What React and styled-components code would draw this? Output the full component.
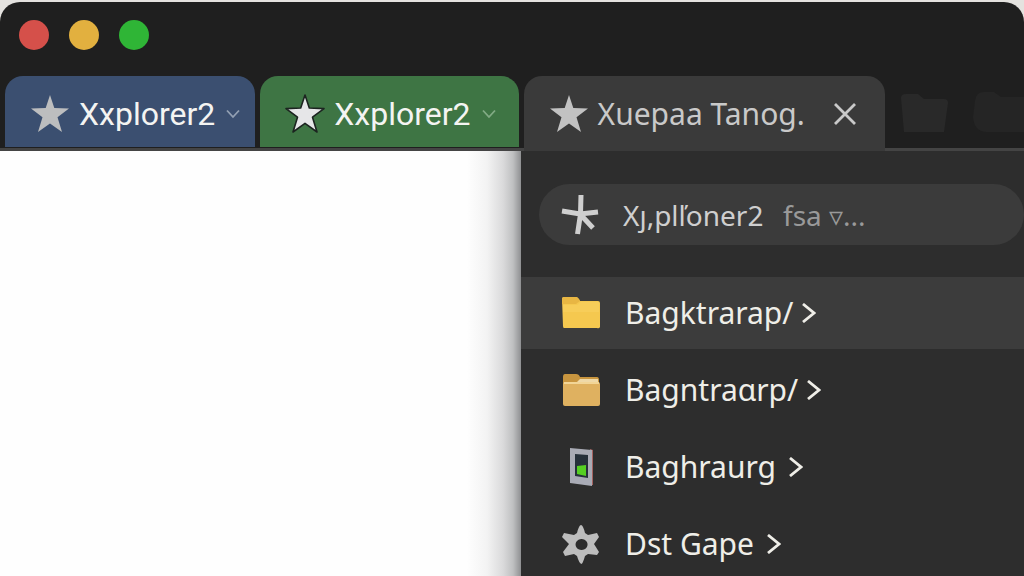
import React from "react";
import styled, { createGlobalStyle, css } from "styled-components";

const GlobalStyle = createGlobalStyle`
  *, *::before, *::after {
    box-sizing: border-box;
  }

  body {
    margin: 0;
    background: #e4e2df;
    font-family: "Noto Sans", "Open Sans", sans-serif;
  }

  button, input {
    font: inherit;
    color: inherit;
  }
`;

const Window = styled.div`
  display: flex;
  flex-direction: column;
  height: 100vh;
  padding-top: 2px;
  overflow: hidden;
`;

const TitleBar = styled.header`
  display: flex;
  align-items: center;
  gap: 20px;
  flex: none;
  height: 74px;
  padding: 0 19px 8px;
  border-radius: 20px 20px 0 0;
  background: #1f1f1f;
`;

const WindowButton = styled.button`
  width: 30px;
  height: 30px;
  padding: 0;
  border: 0;
  border-radius: 50%;
  background: ${({ $color }) => $color};
`;

const TabBar = styled.nav`
  display: flex;
  gap: 5px;
  flex: none;
  height: 75px;
  padding-left: 5px;
  background: linear-gradient(#1f1f1f 72px, #444444 72px);
`;

const Tab = styled.div`
  display: flex;
  align-items: center;
  flex: none;
  height: ${({ $active }) => ($active ? "75px" : "71px")};
  padding: ${({ $active }) => ($active ? "0" : "4px")}
    ${({ $roomy }) => ($roomy ? "20px" : "12px")} 0 24px;
  border-radius: 18px 18px 0 0;
  background: ${({ $background }) => $background};
  color: ${({ $active }) => ($active ? "#c9c9c9" : "#f4f4f2")};
`;

const TabLink = styled.a`
  display: flex;
  align-items: center;
  gap: 8px;
  color: inherit;
  font-family: ${({ $active }) =>
    $active ? `"Noto Sans", sans-serif` : `Roboto, sans-serif`};
  font-size: ${({ $active }) => ($active ? "30px" : "32px")};
  line-height: 40px;
  text-decoration: none;
  white-space: nowrap;
`;

const TabAction = styled.button`
  display: flex;
  align-items: center;
  justify-content: center;
  width: ${({ $wide }) => ($wide ? "56px" : "20px")};
  height: 40px;
  margin-left: ${({ $wide }) => ($wide ? "12px" : "8px")};
  padding: 0;
  border: 0;
  background: none;
`;

const GhostFolders = styled.div`
  display: flex;
  align-items: center;
  gap: 24px;
  height: 72px;
  padding-left: 10px;
  overflow: hidden;

  svg {
    flex: none;
  }
`;

const Panes = styled.main`
  display: grid;
  grid-template-columns: 521fr 503fr;
  flex: 1;
  min-height: 0;
`;

const Page = styled.section`
  background: linear-gradient(
    to left,
    #8f9092 0,
    #bfc0c1 8px,
    #dadadb 18px,
    #f3f3f3 34px,
    #fefefe 54px
  );
`;

const Sidebar = styled.aside`
  display: flex;
  flex-direction: column;
  gap: 32px;
  min-width: 0;
  padding-top: 33px;
  overflow: hidden;
  background: #2d2d2d;
`;

const SearchBox = styled.label`
  display: flex;
  align-items: center;
  gap: 24px;
  flex: none;
  height: 61px;
  margin-left: 18px;
  padding: 0 22px;
  border-radius: 31px;
  background: #3b3b3b;
  color: #cfcfcf;
`;

const SearchText = styled.span`
  display: flex;
  align-items: center;
  gap: 12px;
`;

const searchFont = css`
  font-size: 28px;
  line-height: 40px;
`;

const SearchInput = styled.input`
  ${searchFont}
  width: 148px;
  padding: 0;
  border: 0;
  outline: 0;
  background: none;
`;

const SearchHint = styled.span`
  ${searchFont}
  color: #999999;
  white-space: nowrap;
`;

const List = styled.ul`
  display: flex;
  flex-direction: column;
  gap: 5px;
  margin: 0;
  padding: 0;
  list-style: none;
`;

const RowButton = styled.button`
  display: flex;
  align-items: center;
  gap: 24px;
  width: 100%;
  height: 72px;
  padding: 0 40px;
  border: 0;
  background: ${({ $selected }) => ($selected ? "#3c3c3c" : "none")};
  color: #efeee8;
  text-align: left;
`;

const RowLabel = styled.span`
  display: flex;
  align-items: center;
  gap: ${({ $tight }) => ($tight ? "8px" : "12px")};
  font-size: 30px;
  line-height: 40px;
  white-space: nowrap;
`;

const Star = ({ fill, stroke }) => (
  <svg width="42" height="42" viewBox="0 0 42 42" aria-hidden="true">
    <path
      d="M21 2 L25.3 15 L40 15.6 L28.5 24.2 L33 39 L21 30.4 L9 39 L13.5 24.2 L2 15.6 L16.7 15 Z"
      fill={fill}
      stroke={stroke}
      strokeWidth="1.6"
      strokeLinejoin="round"
    />
  </svg>
);

const Chevron = ({ stroke }) => (
  <svg width="14" height="10" viewBox="0 0 14 10" fill="none" aria-hidden="true">
    <path d="M1 1.5 L7 8 L13 1.5" stroke={stroke} strokeWidth="1.8" />
  </svg>
);

const Close = () => (
  <svg width="24" height="24" viewBox="0 0 24 24" aria-hidden="true">
    <path d="M2 2 L22 22 M22 2 L2 22" stroke="#c9c9c9" strokeWidth="2.8" />
  </svg>
);

const GhostFolder = ({ wide }) => (
  <svg width={wide ? 60 : 48} height="42" viewBox={wide ? "0 0 60 42" : "0 0 48 42"} aria-hidden="true">
    {wide ? (
      <path d="M3 10 Q4 1 12 1 H22 L29 6 H60 V41 H14 Q2 40 1 26 Z" fill="#252525" />
    ) : (
      <path d="M1 7 Q1 3 6 3 H18 L24 8 H44 Q48 8 48 12 L44 41 H4 Z" fill="#292929" />
    )}
  </svg>
);

const Asterisk = () => (
  <svg width="38" height="42" viewBox="0 0 38 42" fill="none" aria-hidden="true">
    <path
      d="M20 1 L19.500 20 L16.500 40 M1 17 L19 20 L37 18 M19 20 L32 34"
      stroke="#cfcfcf"
      strokeWidth="5"
    />
  </svg>
);

const YellowFolder = () => (
  <svg width="40" height="34" viewBox="0 0 40 34" aria-hidden="true">
    <path d="M1 3 Q1 1 3 1 H15 Q17 1 19 5 H37 Q39 5 39 7 V31 Q38 33 36 32 H3 Q2 32 2 30 Z" fill="#f5c84f" />
    <path d="M1 3 Q1 1 3 1 H15 Q17 1 19 5 L15 8 H1 Z" fill="#e8b643" />
    <path d="M2 9 H16 L20 6 H38 V16 H2 Z" fill="#f7cd59" />
  </svg>
);

const TanFolder = () => (
  <svg width="40" height="34" viewBox="0 0 40 34" aria-hidden="true">
    <path d="M2 4 Q2 1 4 1 H15 Q18 1 19 4 H36 Q38 4 38 7 V14 H2 Z" fill="#c8953f" />
    <path d="M19 6 H37 V9 H16 Z" fill="#efd9a8" />
    <rect x="2" y="9" width="37" height="24" rx="2" fill="#dfb160" />
    <path d="M3 9 H38 V11 H3 Z" fill="#f2d596" />
  </svg>
);

const Device = () => (
  <svg width="40" height="40" viewBox="0 0 40 40" aria-hidden="true">
    <path d="M29 2 L32 3 V38 L29 38 Z" fill="#a4625f" />
    <path d="M9 1 L31 3 V39 L9 36 Z" fill="#a9abb5" />
    <path d="M14 7 L27 8 V31 L14 29 Z" fill="#26303a" />
    <path d="M16 19 L25 18 V29 L16 27 Z" fill="#55cf22" />
  </svg>
);

const Gear = () => (
  <svg width="40" height="40" viewBox="0 0 40 40" aria-hidden="true">
    <path
      fillRule="evenodd"
      fill="#bdbdbd"
      d="M20 1 Q22 1 24 9 L27 11 L36 9 L38 13 L33 20 L38 28 L36 31 L27 30 L24 32 Q22 39 20.500 40 Q18 39 16 32 L13 30 L4 32 L2 28 L8 20 L1 13 L3 9 L13 11 L16 9 Q18 1 20 1 Z M20.500 15 a6 5.500 0 1 0 0.100 0 Z"
    />
  </svg>
);

const RowArrow = () => (
  <svg width="15" height="20" viewBox="0 0 15 20" fill="none" aria-hidden="true">
    <path d="M2 1 L13 10 L2 19" stroke="#efeee8" strokeWidth="2.8" />
  </svg>
);

const windowButtons = [
  { label: "Close", color: "#d5504a" },
  { label: "Minimize", color: "#e2b03f" },
  { label: "Zoom", color: "#2fb536" },
];

const rows = [
  { label: "Bagktrarap/", icon: <YellowFolder />, selected: true, tight: true },
  { label: "Bagntraɑrp/", icon: <TanFolder />, tight: true },
  { label: "Baghraurg", icon: <Device /> },
  { label: "Dst Gape", icon: <Gear /> },
];

const App = () => (
  <>
    <GlobalStyle />
    <Window>
      <TitleBar>
        {windowButtons.map(({ label, color }) => (
          <WindowButton key={label} type="button" aria-label={label} $color={color} />
        ))}
      </TitleBar>
      <TabBar>
        <Tab $background="#3b4f70">
          <TabLink href="#first">
            <Star fill="#bdbebf" />
            Xxplorer2
          </TabLink>
          <TabAction type="button" aria-label="Tab menu">
            <Chevron stroke="#93a0b3" />
          </TabAction>
        </Tab>
        <Tab $background="#3e7544" $roomy>
          <TabLink href="#second">
            <Star fill="#e6e6e8" stroke="#1c2420" />
            Xxplorer2
          </TabLink>
          <TabAction type="button" aria-label="Tab menu">
            <Chevron stroke="#82ab85" />
          </TabAction>
        </Tab>
        <Tab $background="#3a3a3a" $active>
          <TabLink href="#third" $active aria-current="page">
            <Star fill="#c2c2c2" />
            Xuepaa Tanog.
          </TabLink>
          <TabAction type="button" aria-label="Close tab" $wide>
            <Close />
          </TabAction>
        </Tab>
        <GhostFolders>
          <GhostFolder />
          <GhostFolder wide />
        </GhostFolders>
      </TabBar>
      <Panes>
        <Page />
        <Sidebar>
          <SearchBox>
            <Asterisk />
            <SearchText>
              <SearchInput aria-label="Search" defaultValue="Xȷ,plľoner2" />
              <SearchHint>fsa ▿...</SearchHint>
            </SearchText>
          </SearchBox>
          <List>
            {rows.map(({ label, icon, selected, tight }) => (
              <li key={label}>
                <RowButton type="button" $selected={selected}>
                  {icon}
                  <RowLabel $tight={tight}>
                    {label}
                    <RowArrow />
                  </RowLabel>
                </RowButton>
              </li>
            ))}
          </List>
        </Sidebar>
      </Panes>
    </Window>
  </>
);

export default App;
